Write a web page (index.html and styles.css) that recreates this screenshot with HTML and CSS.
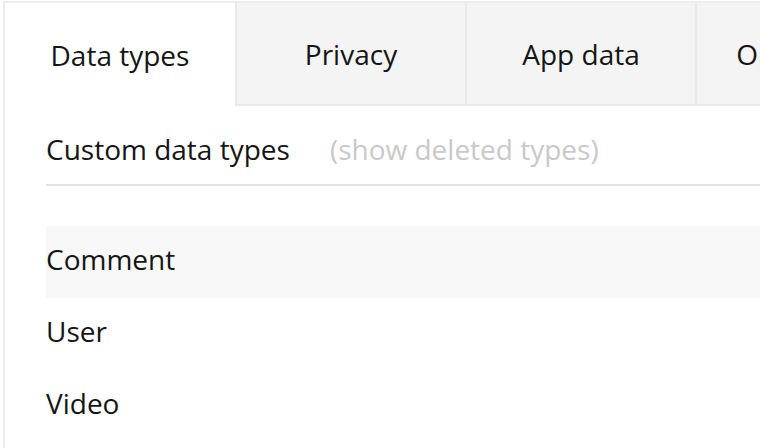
FILE: index.html
```html
<!DOCTYPE html>
<html>
<head>
<meta charset="utf-8">
<link rel="stylesheet" href="styles.css">
</head>
<body>
<div class="frame">
  <div class="panel">
    <div class="tabs">
      <div class="tab active">Data types</div>
      <div class="tab">Privacy</div>
      <div class="tab">App data</div>
      <div class="tab">Option sets</div>
    </div>
    <div class="content">
      <div class="header">
        <span class="title">Custom data types</span>
        <span class="show-deleted">(show deleted types)</span>
      </div>
      <div class="list">
        <div class="row selected">Comment</div>
        <div class="row">User</div>
        <div class="row">Video</div>
      </div>
    </div>
  </div>
</div>
</body>
</html>
```
FILE: styles.css
```css
html, body {
  margin: 0;
  padding: 0;
  background: #ffffff;
  overflow: hidden;
}
body {
  font-family: "Open Sans", "Noto Sans", sans-serif;
  color: #151515;
  width: 760px;
  height: 448px;
}
.frame {
  padding: 1px 0 0 3px;
  width: 760px;
  height: 448px;
  box-sizing: border-box;
  overflow: hidden;
}
.panel {
  border-left: 2px solid #ececec;
  border-top: 2px solid #ececec;
  width: 1000px;
  height: 460px;
}
.tabs {
  display: flex;
  height: 103px;
}
.tab {
  width: 230px;
  flex: none;
  box-sizing: border-box;
  display: flex;
  align-items: center;
  justify-content: center;
  font-size: 28px;
  white-space: nowrap;
  background: #f4f4f4;
  border-left: 2px solid #e9e9e9;
  border-bottom: 2px solid #e9e9e9;
  padding-top: 1px;
}
.tab.active {
  background: #ffffff;
  border-left: none;
  border-bottom: none;
}
.content {
  padding-left: 41px;
}
.header {
  display: flex;
  align-items: center;
  gap: 40px;
  border-bottom: 2px solid #e3e3e3;
  font-size: 28px;
  padding-top: 8px;
  box-sizing: border-box;
  height: 80px;
}
.show-deleted {
  color: #c9c9c9;
}
.list {
  padding-top: 40px;
}
.row {
  height: 72px;
  display: flex;
  align-items: center;
  font-size: 28px;
  padding-bottom: 6px;
  box-sizing: border-box;
}
.row.selected {
  background: #f8f8f8;
}
```
